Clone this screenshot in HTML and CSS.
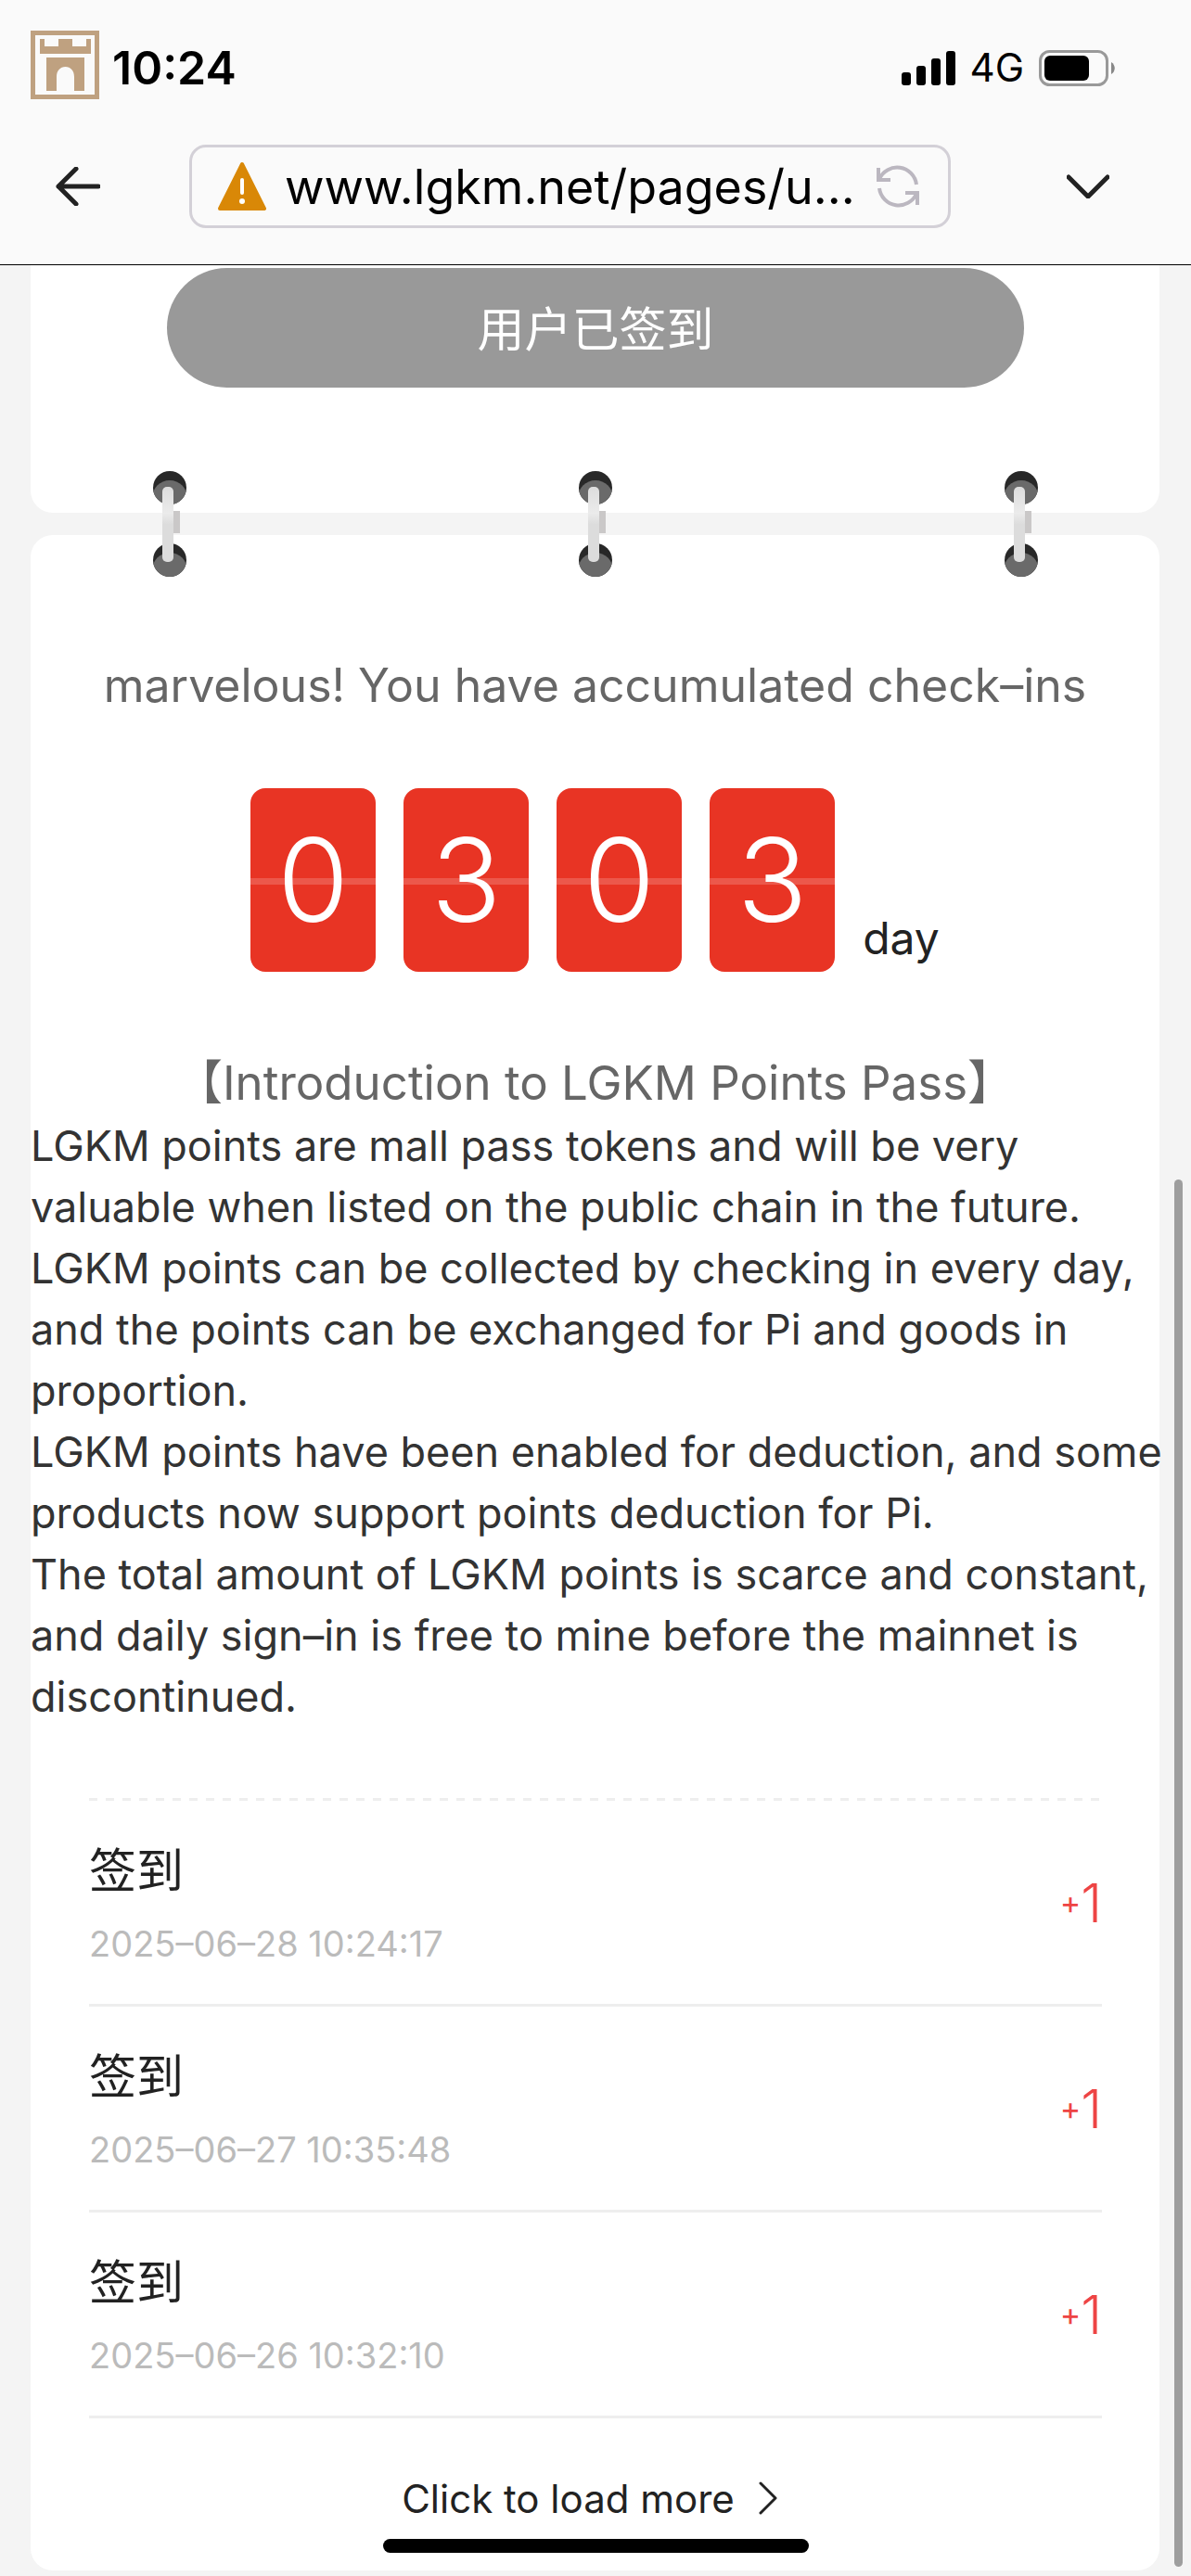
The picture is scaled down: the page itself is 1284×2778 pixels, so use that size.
FILE: index.html
```html
<!DOCTYPE html>
<html lang="en">
<head>
<meta charset="utf-8">
<meta name="viewport" content="width=device-width, initial-scale=1">
<title>Daily check-in</title>
<link rel="stylesheet" href="styles.css">
</head>
<body>
<header class="browser">
  <div class="status">
    <svg class="castle" viewBox="0 0 74 74" aria-hidden="true">
      <path fill="none" stroke="#bfa180" stroke-width="5" d="M2.500 2.500h69v69h-69z"/>
      <path fill="#bfa180" d="M10 9h5v8h15V9h15v8h15V9h5v16H10zM17 29h41v36H47V50c0-7-4-11-9.500-11S28 43 28 50v15H17z"/>
    </svg>
    <span class="time">10:24</span>
    <svg class="signal" viewBox="0 0 58 37" aria-hidden="true">
      <rect x="0" y="23" width="10" height="14" rx="3"/><rect x="16" y="16" width="10" height="21" rx="3"/><rect x="32" y="8" width="10" height="29" rx="3"/><rect x="48" y="0" width="10" height="37" rx="3"/>
    </svg>
    <span class="network">4G</span>
    <svg class="battery" viewBox="0 0 82 39" aria-hidden="true">
      <rect x="1.500" y="1.500" width="72" height="36" rx="10" fill="none" stroke="#999" stroke-width="3"/>
      <rect x="6" y="6" width="48" height="27" rx="6"/>
      <path fill="#888" d="M78 13c5 3 5 10 0 13z"/>
    </svg>
  </div>
  <nav class="toolbar">
    <button class="icon-button" type="button" aria-label="Back">
      <svg class="back" viewBox="0 0 48 42"><path d="M3 21h43M22 2L3 21l19 19"/></svg>
    </button>
    <div class="address">
      <svg class="warning" viewBox="0 0 52 54" aria-hidden="true">
        <path fill="#d98807" stroke="#d98807" stroke-width="4" stroke-linejoin="round" d="M26 3L50 51H2z"/>
        <path stroke="#fff" stroke-width="4" stroke-linecap="round" d="M26 20v14"/><circle cx="26" cy="43" r="3" fill="#fff"/>
      </svg>
      <input class="url" type="text" aria-label="Address" value="www.lgkm.net/pages/u...">
      <button class="reload-button" type="button" aria-label="Reload">
        <svg class="reload" viewBox="0 0 46 46"><path d="M3 15A21 21 0 0 1 43 21M43 31A21 21 0 0 1 3 25M2 3v13h13M44 43V30H31"/></svg>
      </button>
    </div>
    <button class="icon-button" type="button" aria-label="More">
      <svg class="down" viewBox="0 0 46 26"><path d="M2 3l21 21L44 3"/></svg>
    </button>
  </nav>
</header>

<svg class="defs" width="0" height="0" aria-hidden="true">
  <defs>
    <linearGradient id="metal" x1="0" y1="0" x2="0" y2="1"><stop offset="0" stop-color="#ddd"/><stop offset=".35" stop-color="#ebebeb"/><stop offset=".5" stop-color="#dcdcdc"/></linearGradient>
    <clipPath id="hole-top"><circle cx="18" cy="18" r="18"/></clipPath>
    <clipPath id="hole-bottom"><circle cx="18" cy="96" r="18"/></clipPath>
    <symbol id="ring" viewBox="0 0 36 114">
      <g clip-path="url(#hole-top)"><path fill="#282828" d="M0 0h36v36H0z"/><circle cx="18" cy="29" r="19" fill="#6a6a6a"/></g>
      <g clip-path="url(#hole-bottom)"><path fill="#282828" d="M0 78h36v36H0z"/><circle cx="18" cy="107" r="19" fill="#6a6a6a"/></g>
      <path fill="#cac8c8" d="M22 43h7v24h-7z"/><rect x="10" y="17" width="12" height="81" rx="5" fill="url(#metal)"/>
    </symbol>
  </defs>
</svg>

<main class="page">
  <section class="card card-top">
    <button class="checkin" type="button">用户已签到</button>
    <div class="rings" aria-hidden="true">
      <svg class="ring"><use href="#ring"/></svg>
      <svg class="ring"><use href="#ring"/></svg>
      <svg class="ring"><use href="#ring"/></svg>
    </div>
  </section>

  <section class="card card-main">
    <p class="lead">marvelous! You have accumulated check–ins</p>
    <div class="counter">
      <span class="digit">0</span><span class="digit">3</span><span class="digit">0</span><span class="digit">3</span>
      <span class="unit">day</span>
    </div>
    <h2 class="lead intro-title">【Introduction to LGKM Points Pass】</h2>
    <div class="intro">
      <p>LGKM points are mall pass tokens and will be very<br>valuable when listed on the public chain in the future.</p>
      <p>LGKM points can be collected by checking in every day,<br>and the points can be exchanged for Pi and goods in<br>proportion.</p>
      <p>LGKM points have been enabled for deduction, and some<br>products now support points deduction for Pi.</p>
      <p>The total amount of LGKM points is scarce and constant,<br>and daily sign–in is free to mine before the mainnet is<br>discontinued.</p>
    </div>
    <ul class="records">
      <li class="record"><div><h3 class="name">签到</h3><time class="date">2025–06–28 10:24:17</time></div><span class="gain"><span class="plus">+</span>1</span></li>
      <li class="record"><div><h3 class="name">签到</h3><time class="date">2025–06–27 10:35:48</time></div><span class="gain"><span class="plus">+</span>1</span></li>
      <li class="record"><div><h3 class="name">签到</h3><time class="date">2025–06–26 10:32:10</time></div><span class="gain"><span class="plus">+</span>1</span></li>
    </ul>
    <button class="more" type="button">Click to load more
      <svg class="next" viewBox="0 0 20 36" aria-hidden="true"><path d="M2 2l16 16L2 34"/></svg>
    </button>
  </section>
</main>
<div class="scrollbar"></div>
<div class="home-bar"></div>
</body>
</html>
```
FILE: styles.css
```css
* { box-sizing: border-box; }
body {
  margin: 0;
  background: #f4f4f4;
  color: #222;
  font-family: Inter, "Noto Sans CJK SC", sans-serif;
  font-size: 45px;
  position: relative;
}
h2, h3, p, ul { margin: 0; padding: 0; font-weight: 400; }
button, input { border: 0; padding: 0; background: none; color: inherit; font: inherit; }
svg { display: block; flex: none; fill: #000; }

/* Browser chrome */
.browser { background: #fafafa; border-bottom: 1px solid #000; }
.status { display: flex; align-items: center; height: 140px; padding: 0 82px 0 33px; color: #000; }
.castle { width: 74px; height: 74px; }
.time { margin: 6px auto 0 14px; font-size: 50px; font-weight: 600; line-height: 60px; }
.signal { width: 58px; height: 37px; margin-top: 6px; }
.network { margin: 6px 16px 0; font-size: 42px; line-height: 50px; }
.battery { width: 82px; height: 39px; margin-top: 6px; }
.toolbar { display: flex; align-items: center; height: 145px; padding: 0 88px 23px 60px; }
.icon-button { flex: none; }
.icon-button path { fill: none; stroke: #222; stroke-width: 5; stroke-linecap: round; stroke-linejoin: round; }
.back { width: 48px; height: 42px; }
.down { width: 46px; height: 26px; }
.address {
  flex: 1; min-width: 0; display: flex; align-items: center; gap: 20px;
  height: 90px; margin: 0 125px 0 96px; padding: 0 31px 0 28px;
  border: 3px solid #d3d0d7; border-radius: 18px;
}
.warning { width: 52px; height: 54px; }
.url { flex: 1; min-width: 0; height: 80px; color: #000; font-size: 52px; }
.reload-button { margin-left: -12px; }
.reload { width: 46px; height: 46px; }
.reload path { fill: none; stroke: #bbb7c0; stroke-width: 4; }

/* Cards */
.page { padding: 0 34px 5px 33px; }
.card { background: #fff; border-radius: 24px; }
.card-top { position: relative; height: 267px; padding: 3px 146px 0 147px; border-radius: 0 0 24px 24px; }
.checkin { width: 100%; height: 129px; padding-bottom: 4px; border-radius: 65px; background: #999; color: #fff; font-size: 51px; }
.rings { position: absolute; z-index: 1; left: 132px; right: 131px; bottom: -69px; display: flex; justify-content: space-between; }
.ring { width: 36px; height: 114px; }
.card-main { margin-top: 24px; padding-top: 129px; }
.lead { font-size: 50px; line-height: 66px; color: #666; text-align: center; white-space: nowrap; }
.intro-title { margin-bottom: 2px; font-size: 51px; }
.counter { display: flex; justify-content: center; align-items: flex-end; gap: 30px; margin: 78px 0 87px; }
.digit {
  width: 135px; height: 198px; border-radius: 16px; color: #fff;
  background: linear-gradient(#e83424 97px, #ec584b 97px, #ec584b 104px, #e83424 104px);
  font-size: 125px; font-weight: 300; line-height: 198px; text-align: center;
}
.unit { font-size: 48px; line-height: 72px; }
.intro { font-size: 45px; line-height: 66px; color: #333; white-space: nowrap; }

/* Check-in history */
.records { margin: 76px 62px 0 63px; list-style: none; }
.records::before {
  content: ""; display: block; height: 3px;
  background: repeating-linear-gradient(90deg, #eee 0, #eee 9px, transparent 9px, transparent 18px);
}
.record { display: flex; align-items: center; justify-content: space-between; height: 222px; border-bottom: 3px solid #eee; }
.name { font-size: 51px; line-height: 76px; }
.date { display: block; margin-top: 12px; font-size: 38px; line-height: 56px; color: #bbb; }
.gain { display: flex; align-items: center; color: #e44; font-size: 58px; font-weight: 300; line-height: 70px; }
.plus { font-size: 34px; font-weight: 400; }
.more { display: flex; align-items: center; justify-content: center; gap: 26px; width: 100%; height: 164px; padding: 8px 12px 0 0; font-size: 42px; }
.next { width: 20px; height: 36px; }
.next path { fill: none; stroke: #222; stroke-width: 3; stroke-linecap: round; stroke-linejoin: round; }

/* Overlays */
.scrollbar { position: absolute; top: 1272px; bottom: 9px; right: 9px; width: 9px; border-radius: 5px; background: #9e9e9e; }
.home-bar { position: absolute; left: 50%; bottom: 24px; width: 459px; height: 15px; margin-left: -229px; border-radius: 8px; background: #000; }
```
